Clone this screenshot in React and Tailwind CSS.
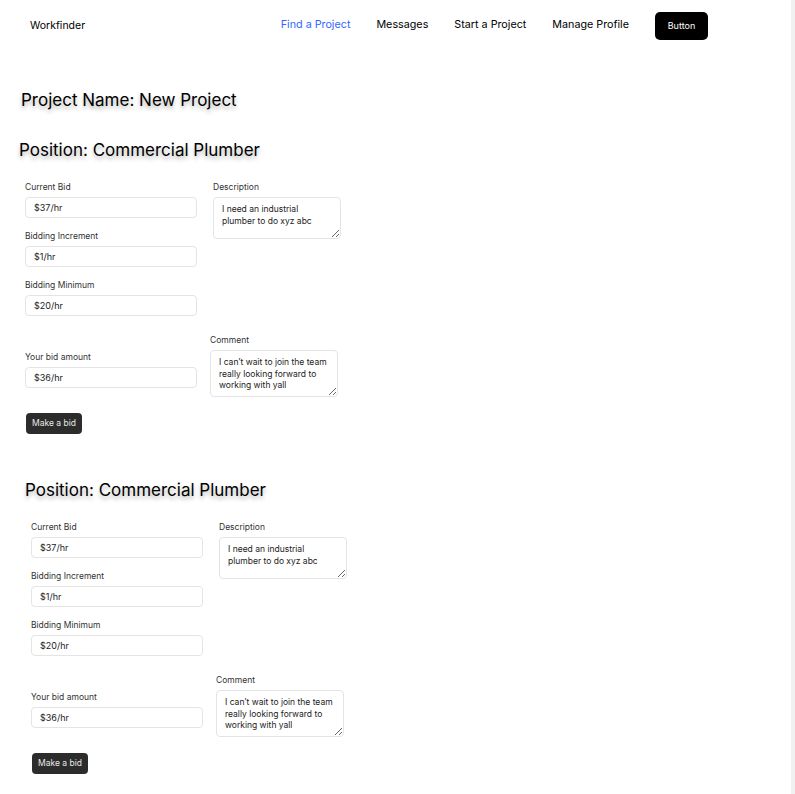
import React from "react";

const font = { fontFamily: "Inter, 'Noto Sans', sans-serif" };

function Field({ label, value }) {
  return (
    <div className="flex flex-col">
      <label className="text-[8.5px] leading-[12px] text-[#333] mb-[4px]">{label}</label>
      <input
        readOnly
        value={value}
        className="w-[172px] h-[21px] rounded-[4px] border border-[#e4e4e4] bg-white px-[8px] text-[9px] text-[#222] outline-none"
      />
    </div>
  );
}

function Area({ label, value, h }) {
  return (
    <div className="flex flex-col">
      <label className="text-[8.5px] leading-[12px] text-[#333] mb-[4px]">{label}</label>
      <textarea
        readOnly
        value={value}
        className={`w-[128px] ${h} block overflow-hidden rounded-[4px] border border-[#e4e4e4] bg-white pl-[8px] pr-0 pt-[6px] text-[8.5px] leading-[11.5px] text-[#222] outline-none`}
      />
    </div>
  );
}

function Position() {
  return (
    <section className="flex flex-col">
      <h2 className="text-[17px] leading-[24px] text-black [text-shadow:0_3px_4px_rgba(0,0,0,0.3)]">
        Position: Commercial Plumber
      </h2>
      <div className="pl-[6px] mt-[19px] flex flex-col">
        <div className="flex items-start gap-[16px]">
          <div className="flex flex-col gap-[12px]">
            <Field label="Current Bid" value="$37/hr" />
            <Field label="Bidding Increment" value="$1/hr" />
            <Field label="Bidding Minimum" value="$20/hr" />
          </div>
          <Area label="Description" value={"I need an industrial\nplumber to do xyz abc"} h="h-[42px]" />
        </div>
        <div className="flex items-start gap-[13px] mt-[18px]">
          <div className="mt-[17px]">
            <Field label="Your bid amount" value="$36/hr" />
          </div>
          <Area
            label="Comment"
            value={"I can\u2019t wait to join the team\nreally looking forward to\nworking with yall"}
            h="h-[47px]"
          />
        </div>
        <div className="mt-[16px] pl-[1px] flex">
          <button className="h-[21px] px-[6px] rounded-[4px] bg-[#2c2c2c] text-[8.5px] leading-[21px] text-[#e8e8e8]">
            Make a bid
          </button>
        </div>
      </div>
    </section>
  );
}

export default function App() {
  return (
    <div className="flex min-h-[794px] bg-white" style={font}>
      <div className="flex-1 flex flex-col">
        <header className="flex items-center justify-between pl-[30px] pr-[83px] pt-[12px] h-[39px]">
          <div className="text-[10.5px] text-black">Workfinder</div>
          <nav className="flex items-center gap-[26px] text-[10.75px]">
            <a className="text-[#3366ff]">Find a Project</a>
            <a className="text-black">Messages</a>
            <a className="text-black">Start a Project</a>
            <a className="text-black">Manage Profile</a>
            <button className="w-[53px] h-[28px] rounded-[5px] bg-black text-white text-[9px]">Button</button>
          </nav>
        </header>
        <main className="flex flex-col pl-[19px] pt-[49px]">
          <h1 className="pl-[2px] text-[17px] leading-[24px] text-black [text-shadow:0_3px_4px_rgba(0,0,0,0.3)]">
            Project Name: New Project
          </h1>
          <div className="mt-[26px]">
            <Position />
          </div>
          <div className="mt-[44px] pl-[6px]">
            <Position />
          </div>
        </main>
      </div>
      <div className="w-[4px] bg-[#f1f1f1]" />
    </div>
  );
}
